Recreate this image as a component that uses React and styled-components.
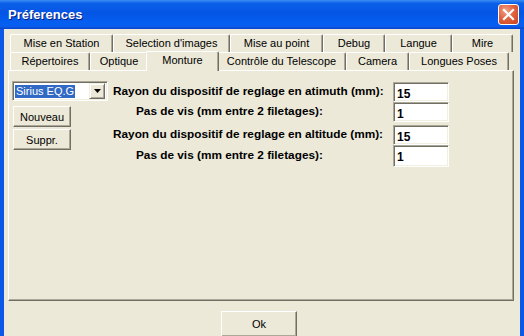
import styled, { createGlobalStyle } from "styled-components";

const Global = createGlobalStyle`
  html, body { margin: 0; padding: 0; background: #ECE9D8; }
  body { font-family: "Liberation Sans", Arial, sans-serif; font-size: 11px; color: #000; }
  * { box-sizing: border-box; }
`;

const Window = styled.div`
  width: 524px;
  height: 336px;
  background: #0A58E5;
  display: flex;
  flex-direction: column;
  overflow: hidden;
`;

const TitleBar = styled.div`
  height: 29px;
  flex: none;
  display: flex;
  align-items: center;
  justify-content: space-between;
  padding: 0 5px 0 8px;
  background: linear-gradient(to bottom, #3C8CF3 0%, #0A5FE8 12%, #0555E5 45%, #0460F2 85%, #0B5BE8 92%, #0842C9 100%);
  color: #fff;
  font-weight: bold;
  font-size: 13px;
  text-shadow: 1px 1px 0 #0A1E80;
`;

const CloseBtn = styled.div`
  width: 21px;
  height: 21px;
  border: 1px solid #fff;
  border-radius: 3px;
  background: radial-gradient(circle at 35% 30%, #F0A38A 0%, #E2633F 45%, #C6431E 100%);
  display: flex;
  align-items: center;
  justify-content: center;
`;

const Body = styled.div`
  flex: 1;
  margin: 0 4px;
  background: #ECE9D8;
  padding: 5px 6px 0 4px;
  display: flex;
  flex-direction: column;
`;

const Tabs = styled.div`
  margin: 0 1px 0 2px;
  display: flex;
  flex-direction: column;
`;

const TabRow = styled.div`
  display: flex;
  height: 18px;
  align-items: flex-end;
  position: relative;
  z-index: ${(p) => (p.front ? 2 : 1)};
`;

const Tab = styled.div`
  width: ${(p) => p.w}px;
  flex: none;
  height: ${(p) => (p.active ? 20 : 18)}px;
  margin: ${(p) => (p.active ? "0 -2px -1px -2px" : "0")};
  padding-top: 2px;
  background: #ECE9D8;
  border-top: 1px solid #fff;
  border-left: 1px solid #fff;
  border-right: 1px solid #716F64;
  box-shadow: inset -1px 0 0 #ACA899;
  border-radius: 2px 2px 0 0;
  text-align: center;
  white-space: nowrap;
  position: relative;
  z-index: ${(p) => (p.active ? 3 : 1)};
`;

const Panel = styled.div`
  height: 231px;
  border-top: 1px solid #fff;
  border-left: 1px solid #fff;
  border-right: 1px solid #716F64;
  border-bottom: 1px solid #716F64;
  box-shadow: inset -1px -1px 0 #ACA899;
  padding: 10px 0 0 3px;
  display: flex;
  gap: 5px;
`;

const SideCol = styled.div`
  width: 96px;
  display: flex;
  flex-direction: column;
  align-items: flex-start;
`;

const Select = styled.div`
  width: 96px;
  height: 20px;
  background: #fff;
  border-top: 1px solid #ACA899;
  border-left: 1px solid #ACA899;
  border-right: 1px solid #fff;
  border-bottom: 1px solid #fff;
  box-shadow: inset 1px 1px 0 #716F64, inset -1px -1px 0 #F1EFE2;
  display: flex;
  align-items: center;
  padding: 2px;
  margin-bottom: 4px;
`;

const SelectText = styled.span`
  background: #316AC5;
  color: #fff;
  padding: 0 1px;
  line-height: 13px;
  flex: none;
`;

const DropBtn = styled.div`
  margin-left: auto;
  width: 16px;
  height: 16px;
  background: #ECE9D8;
  border-top: 1px solid #F1EFE2;
  border-left: 1px solid #F1EFE2;
  border-right: 1px solid #716F64;
  border-bottom: 1px solid #716F64;
  box-shadow: inset 1px 1px 0 #fff, inset -1px -1px 0 #ACA899;
  display: flex;
  align-items: center;
  justify-content: center;
`;

const Button = styled.div`
  width: ${(p) => p.w || 58}px;
  height: ${(p) => p.h || 21}px;
  margin: 1px 0 1px 1px;
  background: #ECE9D8;
  border-top: 1px solid #fff;
  border-left: 1px solid #fff;
  border-right: 1px solid #716F64;
  border-bottom: 1px solid #716F64;
  box-shadow: inset -1px -1px 0 #ACA899;
  display: flex;
  align-items: center;
  justify-content: center;
`;

const Form = styled.div`
  padding-top: 1px;
  display: flex;
  flex-direction: column;
`;

const FieldRow = styled.div`
  display: grid;
  grid-template-columns: 280px 56px;
  height: ${(p) => p.h || 20}px;
  margin-top: ${(p) => p.gap || 0}px;
  align-items: center;
`;

const Label = styled.div`
  font-size: 11.8px;
  font-weight: bold;
  padding-left: ${(p) => p.indent || 0}px;
  padding-bottom: 2px;
  white-space: nowrap;
`;

const Input = styled.div`
  height: ${(p) => p.h || 20}px;
  background: #fff;
  border-top: 1px solid #ACA899;
  border-left: 1px solid #ACA899;
  border-right: 1px solid #fff;
  border-bottom: 1px solid #fff;
  box-shadow: inset 1px 1px 0 #716F64, inset -1px -1px 0 #F1EFE2;
  font-size: 12px;
  font-weight: bold;
  padding: 4px 0 0 3px;
`;

const Footer = styled.div`
  display: flex;
  justify-content: center;
  padding: 9px 5px 0 0;
`;

const row1 = [
  ["Mise en Station", 103],
  ["Selection d'images", 117],
  ["Mise au point", 93],
  ["Debug", 62],
  ["Langue", 67],
  ["Mire", 61],
];
const row2 = [
  ["Répertoires", 80],
  ["Optique", 58],
  ["Monture", 73],
  ["Contrôle du Telescope", 129],
  ["Camera", 63],
  ["Longues Poses", 100],
];

export default function App() {
  return (
    <Window>
      <Global />
      <TitleBar>
        <span>Préferences</span>
        <CloseBtn>
          <svg width="13" height="13" viewBox="0 0 13 13">
            <path d="M2 2 L11 11 M11 2 L2 11" stroke="#fff" strokeWidth="2.2" strokeLinecap="square" />
          </svg>
        </CloseBtn>
      </TitleBar>
      <Body>
        <Tabs>
          <TabRow>
            {row1.map(([t, w]) => (
              <Tab key={t} w={w}>{t}</Tab>
            ))}
          </TabRow>
          <TabRow front>
            {row2.map(([t, w]) => (
              <Tab key={t} w={w} active={t === "Monture"}>{t}</Tab>
            ))}
          </TabRow>
        </Tabs>
        <Panel>
          <SideCol>
            <Select>
              <SelectText>Sirius EQ.G</SelectText>
              <DropBtn>
                <svg width="7" height="4" viewBox="0 0 7 4">
                  <path d="M0 0 H7 L3.5 4 Z" fill="#000" />
                </svg>
              </DropBtn>
            </Select>
            <Button>Nouveau</Button>
            <Button>Suppr.</Button>
          </SideCol>
          <Form>
            <FieldRow>
              <Label>Rayon du dispositif de reglage en atimuth (mm):</Label>
              <Input>15</Input>
            </FieldRow>
            <FieldRow>
              <Label indent={23}>Pas de vis (mm entre 2 filetages):</Label>
              <Input>1</Input>
            </FieldRow>
            <FieldRow gap={3}>
              <Label>Rayon du dispositif de reglage en altitude (mm):</Label>
              <Input>15</Input>
            </FieldRow>
            <FieldRow h={22}>
              <Label indent={23}>Pas de vis (mm entre 2 filetages):</Label>
              <Input h={22}>1</Input>
            </FieldRow>
          </Form>
        </Panel>
        <Footer>
          <Button w={76} h={26}>Ok</Button>
        </Footer>
      </Body>
    </Window>
  );
}
